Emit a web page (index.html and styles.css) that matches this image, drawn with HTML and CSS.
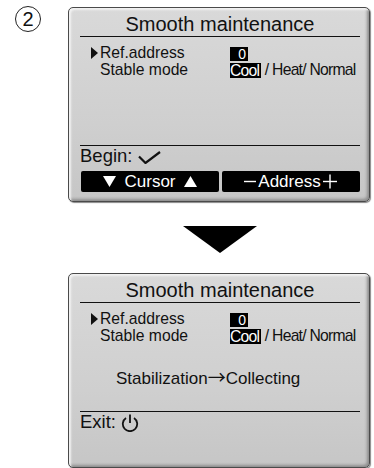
FILE: index.html
```html
<!DOCTYPE html>
<html>
<head>
	<meta charset="utf-8">
	<link rel="stylesheet" href="styles.css">
</head>
<body>
	<div class="page">
		<div class="step"><span>2</span></div>

		<div class="flow">
			<!-- screen before -->
			<div class="panel">
				<div class="title">Smooth maintenance</div>
				<div class="main">
					<div class="row">
						<span class="cursor"></span>
						<span class="label">Ref.address</span>
						<span class="value"><span class="num">0</span></span>
					</div>
					<div class="row">
						<span class="label">Stable mode</span>
						<span class="value"><span class="sel">Cool</span> / Heat/ Normal</span>
					</div>
				</div>
				<div class="foot">
					<div class="hint">Begin:
						<svg class="check" width="23" height="13" viewBox="0 0 23 13"><polyline points="1,5.5 7.5,12 22,1" fill="none" stroke="#111" stroke-width="2.2"/></svg>
					</div>
					<div class="keys">
						<div class="key">
							<svg width="13" height="11" viewBox="0 0 13 11"><polygon points="0,0 13,0 6.5,11" fill="#fff"/></svg>
							<span>Cursor</span>
							<svg width="13" height="11" viewBox="0 0 13 11"><polygon points="0,11 13,11 6.5,0" fill="#fff"/></svg>
						</div>
						<div class="key">
							<svg width="13" height="13" viewBox="0 0 13 13"><line x1="0" y1="6.5" x2="12" y2="6.5" stroke="#fff" stroke-width="1.4"/></svg>
							<span>Address</span>
							<svg width="16" height="15" viewBox="0 0 16 15"><line x1="1" y1="7.5" x2="15" y2="7.5" stroke="#fff" stroke-width="1.4"/><line x1="8" y1="0.5" x2="8" y2="14.5" stroke="#fff" stroke-width="1.4"/></svg>
						</div>
					</div>
				</div>
			</div>

			<div class="down"></div>

			<!-- screen after -->
			<div class="panel">
				<div class="title">Smooth maintenance</div>
				<div class="main">
					<div class="row">
						<span class="cursor"></span>
						<span class="label">Ref.address</span>
						<span class="value"><span class="num">0</span></span>
					</div>
					<div class="row">
						<span class="label">Stable mode</span>
						<span class="value"><span class="sel">Cool</span> / Heat/ Normal</span>
					</div>
					<div class="msg">Stabilization<span class="arrow">→</span>Collecting</div>
				</div>
				<div class="foot">
					<div class="hint">Exit:
						<svg class="power" width="18" height="18" viewBox="0 0 18 18"><path d="M5 4 A7.2 7.2 0 1 0 13 4" fill="none" stroke="#111" stroke-width="1.8"/><line x1="9" y1="0.5" x2="9" y2="9" stroke="#111" stroke-width="1.8"/></svg>
					</div>
				</div>
			</div>
		</div>
	</div>
</body>
</html>
```

FILE: styles.css
```css
body, html {
	margin: 0;
	padding: 0;
	background: #fff;
}

body {
	font-family: "Liberation Sans", Arial, sans-serif;
	color: #111;
}

.page {
	display: flex;
	align-items: flex-start;
	padding-top: 7px;
}

.step {
	box-sizing: border-box;
	width: 26px;
	height: 26px;
	margin: -1px 0 0 15px;
	border: 1.2px solid #222;
	border-radius: 50%;
	display: flex;
	align-items: center;
	justify-content: center;
	font-size: 20px;
	font-weight: 300;
	line-height: 1;
}

.flow {
	display: flex;
	flex-direction: column;
	align-items: center;
	margin-left: 27px;
	width: 303px;
}

.panel {
	box-sizing: border-box;
	width: 302px;
	height: 195px;
	align-self: flex-start;
	padding: 5px 9px 0 11px;
	border: 1px solid #4a4a4a;
	border-radius: 5px;
	background: linear-gradient(#d9d9d9, #cfcfcf 60%, #c6c6c6);
	box-shadow: inset 2px 2px 2px #f2f2f2, inset -2px -2px 3px #8d8d8d, 1px 1px 1px #888;
}

.title {
	height: 23px;
	line-height: 23px;
	font-size: 20px;
	text-align: center;
	border-bottom: 1px solid #111;
}

.main {
	height: 108px;
	padding-top: 7px;
	box-sizing: border-box;
}

.row {
	display: flex;
	align-items: center;
	height: 17px;
	font-size: 15.7px;
	line-height: 17px;
}

.cursor {
	flex-shrink: 0;
	width: 0;
	height: 0;
	margin-left: 11px;
	border-top: 6px solid transparent;
	border-bottom: 6px solid transparent;
	border-left: 7px solid #111;
}

.label {
	flex-shrink: 0;
	width: 130px;
	margin-left: 2px;
}

.row .label:first-child {
	margin-left: 20px;
}

.value {
	white-space: pre;
	letter-spacing: -0.75px;
}

.num {
	display: inline-block;
	box-sizing: border-box;
	width: 18px;
	height: 14px;
	line-height: 14px;
	padding-right: 2px;
	background: #000;
	color: #fff;
	text-align: right;
	font-family: "Liberation Sans Narrow", "Liberation Sans", sans-serif;
	font-size: 14px;
	letter-spacing: 0;
	vertical-align: middle;
}

.sel {
	display: inline-block;
	height: 15px;
	line-height: 15px;
	padding: 0 2px 0 0;
	background: #000;
	color: #fff;
	vertical-align: middle;
}

.msg {
	margin: 22px 0 0 36px;
	font-size: 17px;
	line-height: 20px;
}

.arrow {
	font-family: "Noto Sans CJK JP", "DejaVu Sans", sans-serif;
	font-size: 18px;
}

.foot {
	border-top: 1px solid #111;
}

.hint {
	display: flex;
	align-items: center;
	height: 20px;
	font-size: 18.5px;
	line-height: 20px;
}

.check {
	margin: 2px 0 0 6px;
}

.power {
	margin: 1px 0 0 5px;
}

.keys {
	display: flex;
	gap: 3px;
	margin: 5px 0 0 1px;
}

.key {
	width: 138px;
	height: 21px;
	border-radius: 2px;
	background: #000;
	color: #fff;
	display: flex;
	align-items: center;
	justify-content: center;
	gap: 8px;
	font-size: 17px;
}

.key:last-child {
	gap: 1px;
}

.down {
	width: 0;
	height: 0;
	margin: 24px 0 20px;
	border-left: 37px solid transparent;
	border-right: 37px solid transparent;
	border-top: 27px solid #000;
}
```
